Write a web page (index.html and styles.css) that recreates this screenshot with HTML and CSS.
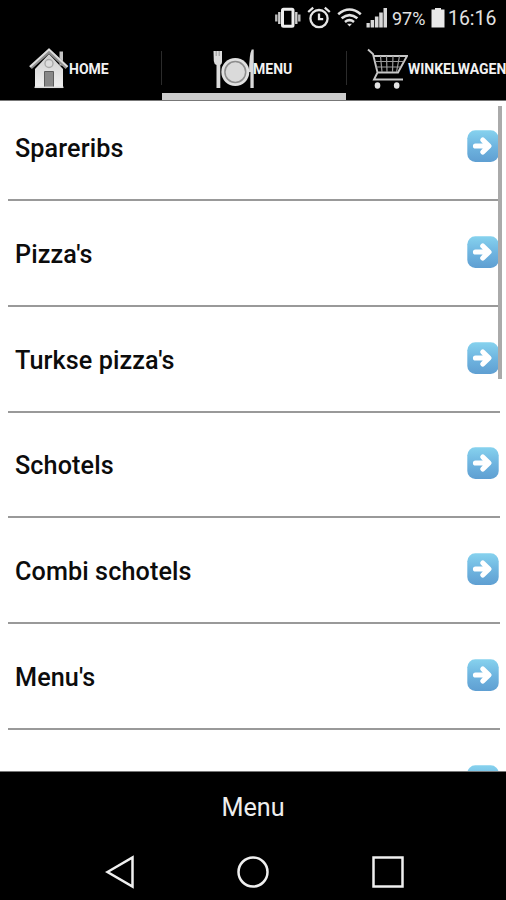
FILE: index.html
```html
<!DOCTYPE html>
<html lang="nl">
<head>
<meta charset="utf-8">
<title>Menu</title>
<link rel="stylesheet" href="styles.css">
</head>
<body>
<svg class="defs" width="0" height="0">
  <defs>
    <linearGradient id="blue" x1="0" y1="0" x2="0" y2="1">
      <stop offset="0" stop-color="#86d2ee"/>
      <stop offset=".5" stop-color="#6fb5e0"/>
      <stop offset="1" stop-color="#5f9fd2"/>
    </linearGradient>
    <linearGradient id="wall" x1="0" y1="0" x2="0" y2="1">
      <stop offset="0" stop-color="#cfcfcf"/>
      <stop offset="1" stop-color="#f0f0f0"/>
    </linearGradient>
    <symbol id="go" viewBox="0 0 32 32">
      <rect x=".3" y=".3" width="31.4" height="31.6" rx="8" fill="url(#blue)"/>
      <path d="M8.5 16H21M15.800 10L22 16L15.800 22" fill="none" stroke="#fff" stroke-width="5.200" stroke-linejoin="round" stroke-linecap="round"/>
    </symbol>
  </defs>
</svg>
<div class="phone">
  <header class="status">
    <svg class="vibrate" width="27" height="22" viewBox="0 0 27 22">
      <rect x="8.5" y="2.3" width="10.5" height="17" rx="1" fill="none" stroke="#eee" stroke-width="3"/>
      <path d="M5.3 5v12M22.3 5v12" stroke="#ccc" stroke-width="2.4"/>
      <path d="M2.300 7.500v7M25.300 7.500v7" stroke="#bbb" stroke-width="2.400"/>
    </svg>
    <svg class="alarm" width="24" height="24" viewBox="0 0 24 24" fill="none" stroke="#e6e6e6" stroke-width="2.300">
      <circle cx="12" cy="12.600" r="8.600"/>
      <path d="M12 7.500v5.600h4.200M1.200 6L6.200 1.600M22.800 6L17.800 1.600"/>
    </svg>
    <svg class="wifi" width="25" height="20" viewBox="0 0 25 20" fill="none" stroke="#e2e2e2" stroke-width="2.600">
      <path d="M1.200 6.200Q12.500-3.200 23.800 6.200M4.600 10.300Q12.500 3.800 20.400 10.300M8 14Q12.500 10.400 17 14"/>
      <path d="M10 15.800h5L12.500 18.600z" fill="#e2e2e2" stroke="none"/>
    </svg>
    <svg class="signal" width="22" height="20" viewBox="0 0 22 20" fill="#d8d8d8">
      <path d="M.5 15h3.300v4.500H.5zM4.600 12h3.500v7.500H4.600zM8.900 8.500h3.600v11H8.900zM13.200 4.500h3.600v15h-3.600zM17.500 0H21v19.500h-3.500z"/>
    </svg>
    <span class="percent">97%</span>
    <svg class="battery" width="14" height="20" viewBox="0 0 14 20" fill="#e8e8e8">
      <path d="M4 0h6v1.500h3.500v18H.5v-18H4z"/>
    </svg>
    <span class="clock">16:16</span>
  </header>
  <nav class="tabs">
    <a class="tab home">
      <svg width="40" height="42" viewBox="0 0 40 42">
        <path d="M30.500 3.500h3.500v14h-3.500z" fill="#c4c4c4"/>
        <path d="M6 21L20 6L34 21V40H6z" fill="url(#wall)"/>
        <path d="M1.500 19.500L20 3L38 19.500" fill="none" stroke="#929292" stroke-width="4"/>
        <path d="M1 18.800L20 1.500L38.500 18.800" fill="none" stroke="#dedede" stroke-width="1.800"/>
        <circle cx="20" cy="15.500" r="4" fill="#ddd" stroke="#aaa" stroke-width="1.400"/>
        <path d="M15.500 23.500h9V39.500h-9z" fill="#888" stroke="#5d5d5d"/>
        <path d="M5.500 39.300h29" stroke="#ddd" stroke-width="1.500"/>
      </svg><span>HOME</span>
    </a>
    <a class="tab menu active">
      <svg width="42" height="42" viewBox="0 0 42 42">
        <path d="M1.500 3h8.500v11q0 2-1.700 3V40H4.500V17Q2 16 1.800 13z" fill="#dcdcdc"/>
        <path d="M4.200 3v5M7.200 3v5" stroke="#888" stroke-width=".8"/>
        <circle cx="23.300" cy="24" r="14" fill="#e0e0e0"/>
        <circle cx="23.300" cy="24" r="10.400" fill="#dadada" stroke="#8d8d8d" stroke-width="1.500"/>
        <path d="M41.700 1.500V40H38.400V24H37Q37.200 6 39.700 1.500z" fill="#dadada"/>
      </svg><span>MENU</span>
    </a>
    <a class="tab cart">
      <svg width="41" height="42" viewBox="0 0 41 42" fill="none" stroke="#c6c6c6">
        <path d="M1 1.500L6 6L10.500 24.500H31L40 8H7M10.500 24.500L7 31.500H36" stroke-width="1.900"/>
        <path d="M8 13.500H36.500M9 19H33.500M13.500 8l1.500 16M19.500 8l.500 16M26 8L25.500 24M32.500 8L29.500 24" stroke="#999" stroke-width="1.200"/>
        <ellipse cx="10.500" cy="37.500" rx="2.800" ry="3.200" fill="#e4e4e4" stroke="none"/>
        <ellipse cx="29.700" cy="37.500" rx="2.800" ry="3.200" fill="#e4e4e4" stroke="none"/>
      </svg><span>WINKELWAGEN</span>
    </a>
  </nav>
  <main class="list">
    <div class="row"><span>Spareribs</span><svg class="go"><use href="#go"/></svg></div>
    <div class="row"><span>Pizza's</span><svg class="go"><use href="#go"/></svg></div>
    <div class="row"><span>Turkse pizza's</span><svg class="go"><use href="#go"/></svg></div>
    <div class="row"><span>Schotels</span><svg class="go"><use href="#go"/></svg></div>
    <div class="row"><span>Combi schotels</span><svg class="go"><use href="#go"/></svg></div>
    <div class="row"><span>Menu's</span><svg class="go"><use href="#go"/></svg></div>
    <div class="row"><svg class="go"><use href="#go"/></svg></div>
    <div class="scrollbar"></div>
  </main>
  <footer class="title">Menu</footer>
  <div class="keys">
    <svg width="30" height="34" viewBox="0 0 30 34"><path d="M2.500 17L27.500 2.500V31.500z"/></svg>
    <svg width="34" height="34" viewBox="0 0 34 34"><circle cx="17" cy="17" r="14.500"/></svg>
    <svg width="34" height="34" viewBox="0 0 34 34"><path d="M2.500 2.500h29v29h-29z"/></svg>
  </div>
</div>
</body>
</html>
```
FILE: styles.css
```css
body {
  margin: 0;
  background: #000;
  font-family: Roboto, "Liberation Sans", sans-serif;
}

.defs { position: absolute; }

.phone {
  display: flex;
  flex-direction: column;
  width: 506px;
  height: 900px;
  overflow: hidden;
  background: #000;
}

svg { display: block; flex: none; }

.status {
  display: flex;
  align-items: center;
  height: 36px;
  padding-left: 274px;
  box-sizing: border-box;
  color: #e2e2e2;
  white-space: nowrap;
}

.alarm { margin-left: 6px; }
.wifi { margin-left: 6px; }
.signal { margin-left: 4px; }
.percent { width: 40px; margin-left: 4px; font-size: 18px; }
.battery { margin-left: -1px; }
.clock { margin-left: 3px; font-size: 19.4px; }

.tabs {
  display: flex;
  height: 65px;
  box-sizing: border-box;
  border-bottom: 1px solid #777;
}

.tab {
  display: flex;
  align-items: center;
  flex: none;
  width: 184px;
  box-sizing: border-box;
  padding-top: 1px;
  color: #f2f2f2;
  font-size: 14px;
  font-weight: 700;
  white-space: nowrap;
  background: linear-gradient(#2b2b2b, #2b2b2b) 0 15px / 1px 34px no-repeat;
}

.home { width: 161px; padding-left: 29px; background: none; }
.menu { width: 185px; padding-left: 51px; }
.cart { width: 160px; padding-left: 21px; overflow: hidden; }
.menu span { margin-left: -1px; }

.active {
  background:
    linear-gradient(#ccc, #ccc) 1px 100% / 184px 7px no-repeat,
    linear-gradient(#2b2b2b, #2b2b2b) 0 15px / 1px 34px no-repeat;
}

.list {
  position: relative;
  height: 671px;
  box-sizing: border-box;
  padding: 0 6px 0 8px;
  overflow: hidden;
  background: #fff;
  border-bottom: 1px solid #777;
}

.row {
  display: flex;
  align-items: center;
  height: 105.85px;
  box-sizing: border-box;
  padding: 0 2px 2px 7px;
  border-bottom: 2px solid #999;
  color: #0c0c0c;
  font-size: 25.2px;
  font-weight: 500;
  letter-spacing: .1px;
}

.row:first-child { margin-top: -6px; }
.row span { padding-top: 5px; }
.go { width: 32px; height: 32px; margin-left: auto; margin-right: -.5px; }

.scrollbar {
  position: absolute;
  top: 5px;
  right: 4px;
  width: 4px;
  height: 273px;
  background: #aaa;
}

.title {
  height: 71px;
  color: #eee;
  font-size: 25.2px;
  line-height: 71px;
  text-align: center;
}

.keys {
  display: flex;
  align-items: center;
  justify-content: space-between;
  height: 57px;
  padding: 0 101px 0 105px;
}

.keys svg { fill: none; stroke: #f0f0f0; stroke-width: 2.5; }
```
